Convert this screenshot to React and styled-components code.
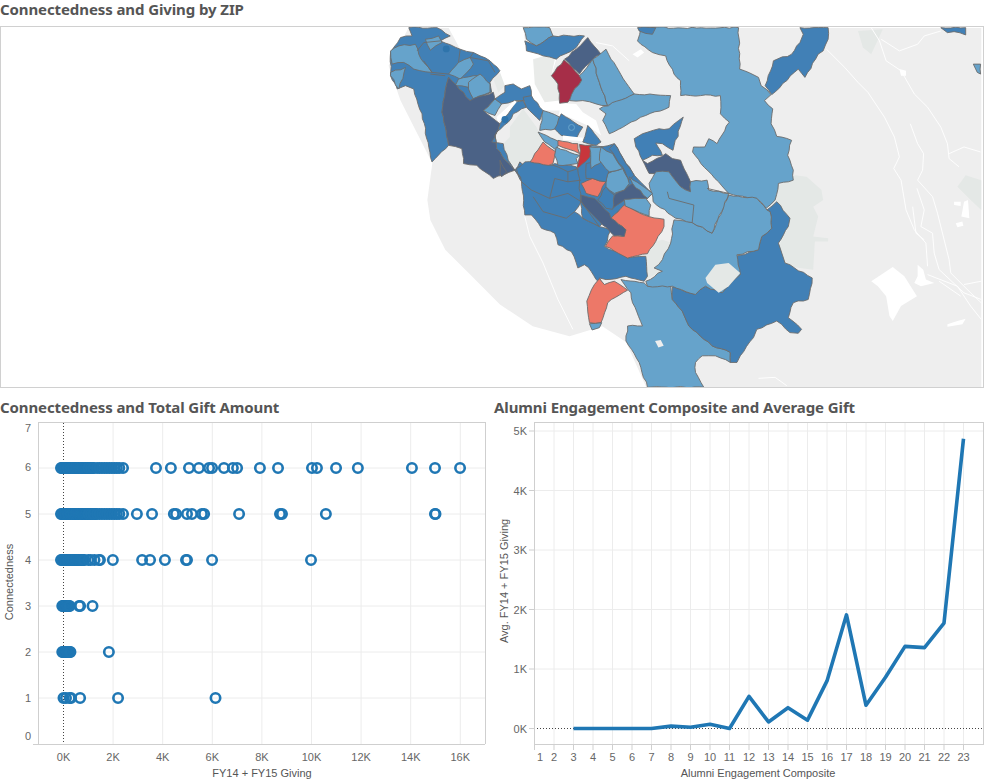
import React from 'react'
import styled, { createGlobalStyle } from 'styled-components'

const GlobalStyle = createGlobalStyle`
  html, body { margin: 0; padding: 0; background: #fff; }
`

const tones = {
  mid: '#4180b6',
  light: '#66a3cb',
  dark: '#4b6286',
  crimson: '#a62e48',
  red: '#c8363c',
  salmon: '#ed7868',
}

const Page = styled.div`
  width: 984px;
  height: 784px;
  overflow: hidden;
  display: flex;
  flex-direction: column;
  font-family: "Liberation Sans", Arial, sans-serif;
`
const Title = styled.h2`
  margin: 0;
  height: 18px;
  padding: ${p => p.$top}px 0 ${p => p.$bottom}px;
  font: 700 15px/18px "Noto Sans", "Open Sans", sans-serif;
  letter-spacing: -0.1px;
  color: #555;
  white-space: nowrap;
`
const MapFrame = styled.svg`
  display: block;
  width: 984px;
  height: 362px;
  box-sizing: border-box;
  border: 1px solid #d0d0d0;
  background: #fff;
`
const ChartRow = styled.div`
  display: grid;
  grid-template-columns: 486px 490px;
  column-gap: 8px;
`
const ChartSvg = styled.svg`
  display: block;
  height: 362px;
  width: ${p => p.$width}px;
`
const Zone = styled.polygon`
  fill: ${p => tones[p.$tone]};
  stroke: #6c6c6c;
  stroke-width: 0.9;
  stroke-linejoin: round;
  vector-effect: non-scaling-stroke;
`
const ZoneLine = styled.polyline`
  fill: none;
  stroke: #6c6c6c;
  stroke-width: 0.9;
  vector-effect: non-scaling-stroke;
`
const Ground = styled.polygon`
  fill: ${p => p.$fill};
`
const Road = styled.polyline`
  fill: none;
  stroke: #fff;
  stroke-width: 1;
  stroke-opacity: 0.9;
  vector-effect: non-scaling-stroke;
`
const Grid = styled.line`
  stroke: #ececec;
  stroke-width: 1;
`
const Frame = styled.line`
  stroke: #cfcfcf;
  stroke-width: 1;
`
const ZeroLine = styled.line`
  stroke: #444;
  stroke-width: 1;
  stroke-dasharray: 1 2;
`
const Tick = styled.text`
  font: 11px "Liberation Sans", Arial, sans-serif;
  fill: #666;
  text-anchor: ${p => p.$anchor || 'middle'};
`
const AxisName = styled.text`
  font: 11px "Liberation Sans", Arial, sans-serif;
  fill: #555;
  text-anchor: middle;
`
const Dot = styled.circle`
  fill: none;
  stroke: #1f77b4;
  stroke-width: 2.6;
`
const Trend = styled.polyline`
  fill: none;
  stroke: #1f77b4;
  stroke-width: 3.6;
  stroke-linejoin: round;
`
const Pin = styled.circle`
  fill: ${p => p.$fill};
  stroke: ${p => p.$stroke};
`

// zip borders are never straight, break each edge up a bit.
// endpoints get sorted so two zones sharing an edge get the same wiggle
const crinkle = pts => {
  const list = pts.split(' ').map(s => s.split(',').map(Number))
  const out = []
  list.forEach((a, i) => {
    const b = list[(i + 1) % list.length]
    out.push(a)
    const flip = a[0] > b[0] || (a[0] === b[0] && a[1] > b[1])
    const [s, e] = flip ? [b, a] : [a, b]
    const len = Math.hypot(e[0] - s[0], e[1] - s[1])
    const steps = Math.floor(len / 14)
    const mids = []
    for (let j = 1; j < steps; j++) {
      const t = j / steps
      const h = Math.sin(s[0] * 12.9 + s[1] * 78.2 + e[0] * 37.7 + e[1] * 11.3 + j * 93.9) * 43758.5
      const w = (h - Math.floor(h) - 0.5) * 5
      mids.push([s[0] + (e[0] - s[0]) * t - ((e[1] - s[1]) / len) * w, s[1] + (e[1] - s[1]) * t + ((e[0] - s[0]) / len) * w])
    }
    out.push(...(flip ? mids.reverse() : mids))
  })
  return out.map(p => p.map(v => v.toFixed(1)).join(',')).join(' ')
}

// map data, each group uses the coordinates of its own crop
const zonesA = [
  ['mid', '50,205 30,165 30,95 60,50 95,45 85,20 170,20 210,45 180,60 240,85 280,95 300,105 330,120 360,150 330,185 335,215 270,240 205,170 195,210 185,275 205,375 155,425 125,280 100,205 75,195'],
  ['mid', '405,450 420,425 470,455 525,430 590,440 600,470 530,490 430,490'],
  ['light', '30,90 55,75 105,70 115,100 130,125 155,155 100,145 70,125 35,130'],
  ['light', '30,155 75,140 55,205 30,165'],
  ['light', '135,55 175,45 185,65 150,88'],
  ['light', '205,160 235,125 270,110 280,130 240,175'],
  ['light', '235,175 280,165 300,165 265,200 225,195'],
  ['light', '265,185 300,160 330,190 330,215 280,235 265,205'],
  ['dark', '205,170 270,240 340,215 345,235 310,270 360,310 345,345 350,385 405,450 370,465 340,475 290,435 250,430 245,385 205,375 185,275 195,210'],
  ['light', '310,270 345,235 365,250 345,285'],
  ['mid', '375,195 400,190 425,205 450,195 455,225 430,240 405,240 365,250 345,235 375,215'],
  ['mid', '405,245 430,240 440,260 400,280 385,305 350,335 335,365 370,370 385,420 405,450 350,385 345,345 360,310 385,280'],
  ['mid', '430,230 455,225 490,270 480,300 440,260'],
  ['light', '490,270 540,290 530,325 480,330'],
  ['mid', '545,280 610,320 590,355 545,345 525,325'],
  ['mid', '625,315 665,365 650,375 610,365'],
  ['light', '475,335 500,345 540,365 530,390 495,365'],
  ['salmon', '490,365 530,395 520,430 470,455 447,430 465,400'],
  ['salmon', '535,360 595,370 600,400 535,375'],
  ['light', '530,380 600,405 590,415 595,430 535,435 525,405'],
  ['red', '600,372 635,375 632,445 592,443 600,410'],
  ['light', '635,375 670,380 670,415 650,445 632,445'],
  ['light', '430,20 510,20 520,45 470,75 440,55'],
  ['mid', '435,60 470,75 520,45 615,45 590,80 555,100 530,115 490,105 460,95 440,90'],
  ['dark', '625,50 665,100 640,115 600,160 555,115 590,85'],
  ['crimson', '553,117 600,165 607,178 585,205 565,245 540,248 535,190 515,165'],
  ['light', '600,165 640,115 660,185 685,255 650,250 610,240 570,240 585,205 607,178'],
  ['light', '640,115 680,85 695,115 765,220 685,255 660,185'],
  ['light', '660,265 765,220 875,225 870,260 800,285 770,300 690,340 670,300 680,280'],
]
const linesA = [
  '150,160 195,165',
  '130,120 155,155 205,160',
  '110,90 130,65 180,60',
  '240,85 235,125',
  '270,110 325,120 345,155',
  '280,95 270,110',
  '405,450 435,490',
]

const zonesB = [
  ['mid', '50,115 75,95 160,105 205,125 235,115 250,185 245,215 225,245 250,265 300,290 335,300 315,350 385,385 440,380 445,440 435,455 380,440 320,450 300,445 310,465 290,450 275,425 255,405 235,415 215,365 175,345 165,310 125,295 95,255 75,255 65,155'],
  ['mid', '235,115 305,50 345,40 405,135 460,190 445,205 375,225 335,265 300,290 250,265'],
  ['dark', '0,90 20,125 5,140 0,130'],
  ['salmon', '300,447 315,465 345,455 385,482 325,520 305,580 270,580 262,515 285,465'],
  ['light', '270,583 307,580 300,595 278,602'],
  ['light', '365,450 435,460 445,470 515,470 520,510 550,545 570,590 640,650 695,670 695,700 650,680 610,680 590,700 590,730 615,775 445,775 420,700 380,635 385,590 430,590 400,520 395,490'],
  ['mid', '520,472 590,495 620,470 670,490 725,435 710,380 780,360 790,320 820,295 815,245 805,240 835,215 875,265 870,290 840,340 860,400 942,445 930,510 885,520 870,565 910,600 900,612 875,610 835,575 775,600 765,625 725,680 715,700 695,700 695,670 640,650 570,590 550,545 520,510'],
  ['light', '440,455 490,425 465,415 490,390 515,340 525,270 580,278 640,310 690,195 775,205 805,240 815,245 820,295 790,320 780,360 715,375 725,435 670,490 620,470 590,495 520,470 445,470'],
  ['salmon', '375,225 450,260 495,268 495,290 470,335 445,372 385,385 318,350 340,318 370,320 380,300 335,265'],
  ['dark', '245,195 285,205 305,225 330,250 335,265 380,300 375,320 345,318 310,285 290,265 265,240 245,215'],
  ['dark', '340,235 345,195 375,180 400,160 445,205 375,210'],
  ['dark', '445,100 500,70 520,85 545,90 575,155 575,185 545,170 510,125 450,130 430,90'],
  ['light', '470,125 510,125 545,170 575,185 575,155 625,150 630,180 690,190 640,310 580,278 530,265 462,215 450,160'],
  ['light', '375,208 440,205 455,225 450,258 378,228'],
  ['mid', '320,170 345,195 340,238 320,235 295,210'],
  ['salmon', '245,160 280,145 320,155 295,200 260,190'],
  ['light', '325,130 370,115 390,160 375,180 345,190 320,170'],
  ['mid', '260,100 300,90 330,120 320,155 280,145 260,145'],
  ['light', '270,50 310,50 310,90 275,115'],
  ['light', '305,50 340,70 370,115 330,125 300,90'],
  ['mid', '345,40 380,100 405,135 390,150 370,110 330,55'],
  ['light', '390,140 460,190 445,205 400,160'],
]
const linesB = [
  '65,155 95,180 150,205 165,145 205,155 245,150',
  '100,200 130,245 200,265 225,245',
  '205,125 205,155',
  '150,205 205,190 245,215',
  '245,215 300,290',
  '505,185 510,205 585,225 580,278',
  '625,175 690,190',
]

const zonesC = [
  ['light', '25,60 35,20 330,20 333,145 390,170 398,195 428,222 408,240 433,265 428,310 445,348 490,360 478,405 495,450 495,480 450,490 440,540 413,565 384,535 300,520 216,430 191,395 194,380 228,380 240,355 265,370 302,305 275,280 275,225 155,225 155,180 135,160 110,105 70,95'],
  ['mid', '410,195 435,120 490,100 515,65 525,40 515,20 600,20 600,55 585,90 570,100 530,170 510,145 430,222'],
  ['mid', '15,355 40,340 90,325 120,325 163,290 132,390 100,370 80,368 100,405 70,405 40,420 20,380'],
  ['mid', '25,20 80,20 70,40 30,30'],
]

const zonesD = [
  ['mid', '550,20 625,20 625,42 590,32 570,35'],
  ['light', '648,130 670,130 670,160 660,155'],
]

const roadsD = [
  '205,85 260,140 300,185 330,215 380,290 410,350 425,410 408,445 430,480 445,570 470,630 505,670 510,740',
  '340,20 365,60 385,120 430,150 470,220 510,260 550,320 570,370 575,415 605,440',
  '575,400 620,380 670,395',
  '370,55 425,90 480,70 500,45 550,30',
  '458,310 480,370 498,400 495,450 480,480 525,530 540,580 575,720 580,760 640,820 672,850',
  '478,505 500,570 490,620 525,640 530,700 545,750 620,820 672,840',
  '465,560 475,640 500,660',
  '510,765 600,800 640,860 672,900',
  '545,785 610,830',
  '620,795 672,785',
  '0,1078 50,1075 85,1100',
]
const lakesD = [
  '340,785 405,742 440,770 478,830 430,860 405,905 395,890 385,830 360,800',
  '480,735 497,750 505,780 530,790 490,800 470,790 480,770',
  '590,545 610,545 610,558 590,555',
  '620,545 632,540 636,595 612,590',
  '595,610 615,605 618,618 600,622',
  '570,915 600,905 625,898 615,915 570,922',
  '425,145 445,150 445,165 430,165',
]
const hillsD = [
  '55,500 110,465 145,470 190,510 195,540 165,560 180,590 165,650 210,655 210,665 170,665 165,750 85,740 60,680 90,620 90,600 30,565 55,520',
  '600,500 625,465 672,480 672,570 640,540',
  '300,30 375,25 340,100 315,80',
]

const CropA = ({ children }) => <g transform="translate(380 20) scale(0.3333)">{children}</g>
const CropB = ({ children }) => <g transform="translate(500 130) scale(0.3333)">{children}</g>
const CropC = ({ children }) => <g transform="translate(630 20) scale(0.3333)">{children}</g>
const CropD = ({ children }) => <g transform="translate(760 20) scale(0.3333)">{children}</g>

const drawZones = zones => zones.map(([tone, p], i) => <Zone key={i} $tone={tone} points={crinkle(p)} />)

const ZipMap = () => (
  <MapFrame viewBox="0 26 984 362">
    <Ground $fill="#eeeeee" points="408,27 984,27 984,388 647,388 627,343 603,327 570,337 533,327 500,305 470,275 445,250 430,220 427,200 432,163 400,100 388,65" />
    <CropD>
      {hillsD.map((p, i) => <Ground key={i} $fill="#e4e8e6" points={p} />)}
      {roadsD.map((p, i) => <Road key={i} points={p} />)}
      {lakesD.map((p, i) => <Ground key={i} $fill="#fff" points={p} />)}
    </CropD>
    <CropA>
      <Ground $fill="#e6e9e7" points="340,175 380,145 385,170 375,195 355,215" />
      <Ground $fill="#e4e8e6" points="390,320 430,265 470,320 490,360 465,400 447,430 425,425 405,440 385,420 370,370 390,350" />
      <Ground $fill="#fff" points="205,20 430,20 440,90 490,105 535,80 565,85 530,115 515,165 535,190 540,248 590,250 610,275 650,300 665,345 625,315 545,280 540,320 530,325 540,270 490,270 455,225 375,195 355,140 330,120 240,85" />
      <Ground $fill="#e9ebe9" points="460,115 530,95 515,165 535,190 540,240 495,245 465,190" />
      <Ground $fill="#fff" points="350,290 405,240 410,245 385,275 355,305" />
      <Road points="650,65 700,75 750,120" />
    </CropA>
    <CropB>
      <Ground $fill="#e4e8e6" points="287,350 318,350 385,385 445,372 470,335 490,330 520,340 490,390 465,415 490,425 440,450 380,410 320,385" />
      <Road points="75,260 90,320 130,400 175,510 220,600" />
    </CropB>
    <CropA>
      {drawZones(zonesA)}
      {linesA.map((p, i) => <ZoneLine key={i} points={p} />)}
      <Ground $fill="#fff" points="350,290 405,240 410,245 385,275 355,305" />
    </CropA>
    <CropC>
      {drawZones(zonesC)}
      <Ground $fill="#fff" points="10,100 35,85 45,95 25,110" />
    </CropC>
    <CropB>
      {drawZones(zonesB)}
      <Ground $fill="#fff" points="190,15 250,22 250,32 190,28" />
      <Ground $fill="#e4e8e6" points="620,445 650,405 690,400 725,430 690,470 660,490 625,460" />
      <Ground $fill="#eeeeee" points="468,635 485,632 494,650 478,655" />
      {linesB.map((p, i) => <ZoneLine key={i} points={p} />)}
    </CropB>
    <CropD>
      {drawZones(zonesD)}
    </CropD>
    <Pin cx="446" cy="48" r="3.5" $fill="#2f74ab" $stroke="none" />
    <Pin cx="505" cy="119" r="3.5" $fill="#2f74ab" $stroke="none" />
    <Pin cx="572" cy="127" r="3" $fill="none" $stroke="#66a3cb" />
  </MapFrame>
)

// connectedness rows, gift amounts in thousands
const range = (from, to, step) => {
  const out = []
  for (let k = from; k <= to; k += step) out.push(k)
  return out
}
const wide = [1.0, 1.1, 1.2, 1.35, 1.45, 1.55, 1.65, 1.75, 1.85, 1.95, 2.05, 2.15, 2.25, 2.4]
const scatter = {
  6: [...range(-0.1, 1.2, 0.03), ...wide, 3.73, 4.33, 5.06, 5.46, 5.87, 5.99, 6.47, 6.83, 7, 7.92, 8.65, 10.02, 10.22, 10.99, 11.87, 14.05, 14.98, 15.99],
  5: [...range(-0.1, 1.3, 0.03), ...wide, 2.96, 3.57, 4.45, 4.54, 4.98, 5.18, 5.58, 5.67, 7.08, 8.73, 8.81, 10.58, 14.98, 15],
  4: [...range(-0.1, 0.85, 0.03), 1.0, 1.1, 1.25, 1.43, 1.47, 1.99, 3.17, 3.49, 4.09, 4.94, 4.98, 5.99, 9.98],
  3: [...range(-0.05, 0.25, 0.03), 0.63, 0.67, 1.17],
  2: [...range(-0.05, 0.3, 0.03), 1.83],
  1: [0, 0.1, 0.25, 0.3, 0.67, 2.2, 6.13],
}

const giftX = k => 63.5 + k * 24.8
const rowY = n => 744 - n * 46

const ScatterChart = () => (
  <ChartSvg $width={486} viewBox="0 422 486 362">
    {[2, 4, 6, 8, 10, 12, 14, 16].map(k => <Grid key={k} x1={giftX(k)} x2={giftX(k)} y1="422" y2="744" />)}
    {[1, 2, 3, 4, 5, 6].map(n => <Grid key={n} x1="38" x2="485" y1={rowY(n)} y2={rowY(n)} />)}
    <Frame x1="38.5" x2="38.5" y1="422" y2="744" />
    <Frame x1="38" x2="485" y1="422.5" y2="422.5" />
    <Frame x1="485.5" x2="485.5" y1="422" y2="744" />
    <Frame x1="33" x2="485" y1="744.5" y2="744.5" />
    <ZeroLine x1="63.5" x2="63.5" y1="423" y2="744" />
    {Object.entries(scatter).map(([n, gifts]) =>
      gifts.map((k, i) => <Dot key={n + i} cx={giftX(k)} cy={rowY(n)} r="4.7" />)
    )}
    {[[7, 432], [6, 471], [5, 518], [4, 564], [3, 610], [2, 656], [1, 702], [0, 740]].map(([n, y]) => (
      <Tick key={n} x="28" y={y}>{n}</Tick>
    ))}
    {[0, 2, 4, 6, 8, 10, 12, 14, 16].map(k => <Tick key={k} x={giftX(k)} y="761">{k}K</Tick>)}
    <AxisName x="262" y="777">FY14 + FY15 Giving</AxisName>
    <AxisName transform="translate(13 582) rotate(-90)">Connectedness</AxisName>
  </ChartSvg>
)

const composite = Array.from({ length: 23 }, (_, i) => i + 1)
const avgGift = { 3: 0, 4: 0, 5: 0, 6: 0, 7: 0, 8: 40, 9: 20, 10: 70, 11: 0, 12: 540, 13: 110, 14: 350, 15: 140, 16: 800, 17: 1910, 18: 390, 19: 860, 20: 1380, 21: 1360, 22: 1770, 23: 4870 }
const scoreX = n => 534.5 + (n - 1) * 19.5
const avgY = v => 728.5 - (v / 1000) * 59.5
const trendPoints = Object.entries(avgGift).map(([n, v]) => `${scoreX(+n)},${avgY(v)}`).join(' ')

const LineChart = () => (
  <ChartSvg $width={490} viewBox="494 422 490 362">
    {composite.slice(1).map(n => <Grid key={n} x1={scoreX(n)} x2={scoreX(n)} y1="422" y2="744" />)}
    {[1, 2, 3, 4, 5].map(k => <Grid key={k} x1="534" x2="983" y1={avgY(k * 1000)} y2={avgY(k * 1000)} />)}
    <Frame x1="534.5" x2="534.5" y1="422" y2="750" />
    <Frame x1="534" x2="984" y1="422.5" y2="422.5" />
    <Frame x1="983.5" x2="983.5" y1="422" y2="744" />
    <Frame x1="534" x2="984" y1="744.5" y2="744.5" />
    {composite.slice(1).map(n => <Frame key={n} x1={scoreX(n)} x2={scoreX(n)} y1="744" y2="750" />)}
    {[0, 1, 2, 3, 4, 5].map(k => <Frame key={k} x1="529" x2="534" y1={avgY(k * 1000)} y2={avgY(k * 1000)} />)}
    <ZeroLine x1="537" x2="984" y1="728.5" y2="728.5" />
    <Trend points={trendPoints} />
    {[0, 1, 2, 3, 4, 5].map(k => (
      <Tick key={k} $anchor="end" x="527" y={avgY(k * 1000) + 4}>{k}K</Tick>
    ))}
    {composite.map(n => <Tick key={n} x={n === 1 ? 540 : scoreX(n)} y="761">{n}</Tick>)}
    <AxisName x="758" y="777">Alumni Engagement Composite</AxisName>
    <AxisName transform="translate(508 581) rotate(-90)">Avg. FY14 + FY15 Giving</AxisName>
  </ChartSvg>
)

const App = () => (
  <Page>
    <GlobalStyle />
    <Title $top={0} $bottom={8}>Connectedness and Giving by ZIP</Title>
    <ZipMap />
    <ChartRow>
      <div>
        <Title $top={10} $bottom={6}>Connectedness and Total Gift Amount</Title>
        <ScatterChart />
      </div>
      <div>
        <Title $top={10} $bottom={6}>Alumni Engagement Composite and Average Gift</Title>
        <LineChart />
      </div>
    </ChartRow>
  </Page>
)

export default App
